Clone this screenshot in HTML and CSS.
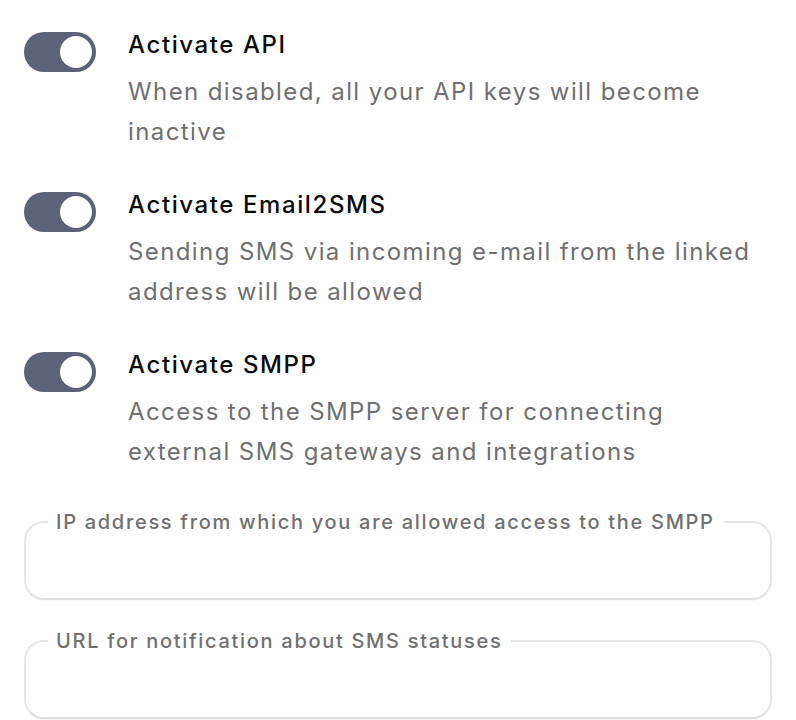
FILE: index.html
```html
<!DOCTYPE html>
<html lang="en">
<head>
<meta charset="utf-8">
<title>Settings</title>
<link rel="stylesheet" href="styles.css">
</head>
<body>
<div class="page">
  <div class="option">
    <span class="toggle on"><span class="knob"></span></span>
    <div class="text">
      <div class="title">Activate API</div>
      <div class="desc">When disabled, all your API keys will become inactive</div>
    </div>
  </div>
  <div class="option">
    <span class="toggle on"><span class="knob"></span></span>
    <div class="text">
      <div class="title">Activate Email2SMS</div>
      <div class="desc">Sending SMS via incoming e-mail from the linked address will be allowed</div>
    </div>
  </div>
  <div class="option">
    <span class="toggle on"><span class="knob"></span></span>
    <div class="text">
      <div class="title">Activate SMPP</div>
      <div class="desc">Access to the SMPP server for connecting external SMS gateways and integrations</div>
    </div>
  </div>
  <fieldset class="field">
    <legend>IP address from which you are allowed access to the SMPP</legend>
    <input class="input" type="text">
  </fieldset>
  <fieldset class="field">
    <legend>URL for notification about SMS statuses</legend>
    <input class="input" type="text">
  </fieldset>
</div>
</body>
</html>
```
FILE: styles.css
```css
html, body {
  margin: 0;
  padding: 0;
  background: #ffffff;
}
body {
  font-family: Inter, "Noto Sans", sans-serif;
  -webkit-font-smoothing: antialiased;
}
.page {
  width: 748px;
  padding: 25px 24px 0 24px;
  display: flex;
  flex-direction: column;
}
.option {
  display: grid;
  grid-template-columns: 72px 1fr;
  column-gap: 32px;
  align-items: start;
  margin-bottom: 33px;
}
.option:nth-of-type(3) {
  margin-bottom: 36px;
}
.toggle {
  width: 72px;
  height: 40px;
  border-radius: 20px;
  background: #5a6378;
  margin-top: 7px;
  display: flex;
  align-items: center;
  justify-content: flex-end;
  padding: 0 4px;
  box-sizing: border-box;
}
.knob {
  width: 32px;
  height: 32px;
  border-radius: 50%;
  background: #ffffff;
}
.title {
  font-size: 24px;
  line-height: 40px;
  font-weight: 500;
  letter-spacing: 1.6px;
  color: #0b0b0b;
}
.desc {
  font-size: 24px;
  line-height: 40px;
  letter-spacing: 1.4px;
  color: #6f6f6f;
  margin-top: 7px;
}
.field {
  margin: 0 0 27px 0;
  padding: 0 22px;
  border: 2px solid #e6e6e6;
  border-bottom-color: #dedede;
  border-radius: 20px;
  height: 92px;
  box-sizing: border-box;
  box-shadow: 0 1px 1px rgba(0, 0, 0, 0.04);
}
.field legend {
  padding: 0 8px;
  font-size: 20px;
  line-height: 28px;
  font-weight: 500;
  letter-spacing: 1.7px;
  color: #707070;
}
.input {
  border: none;
  outline: none;
  background: transparent;
  width: 100%;
  height: 40px;
  font: inherit;
  font-size: 20px;
}
```
